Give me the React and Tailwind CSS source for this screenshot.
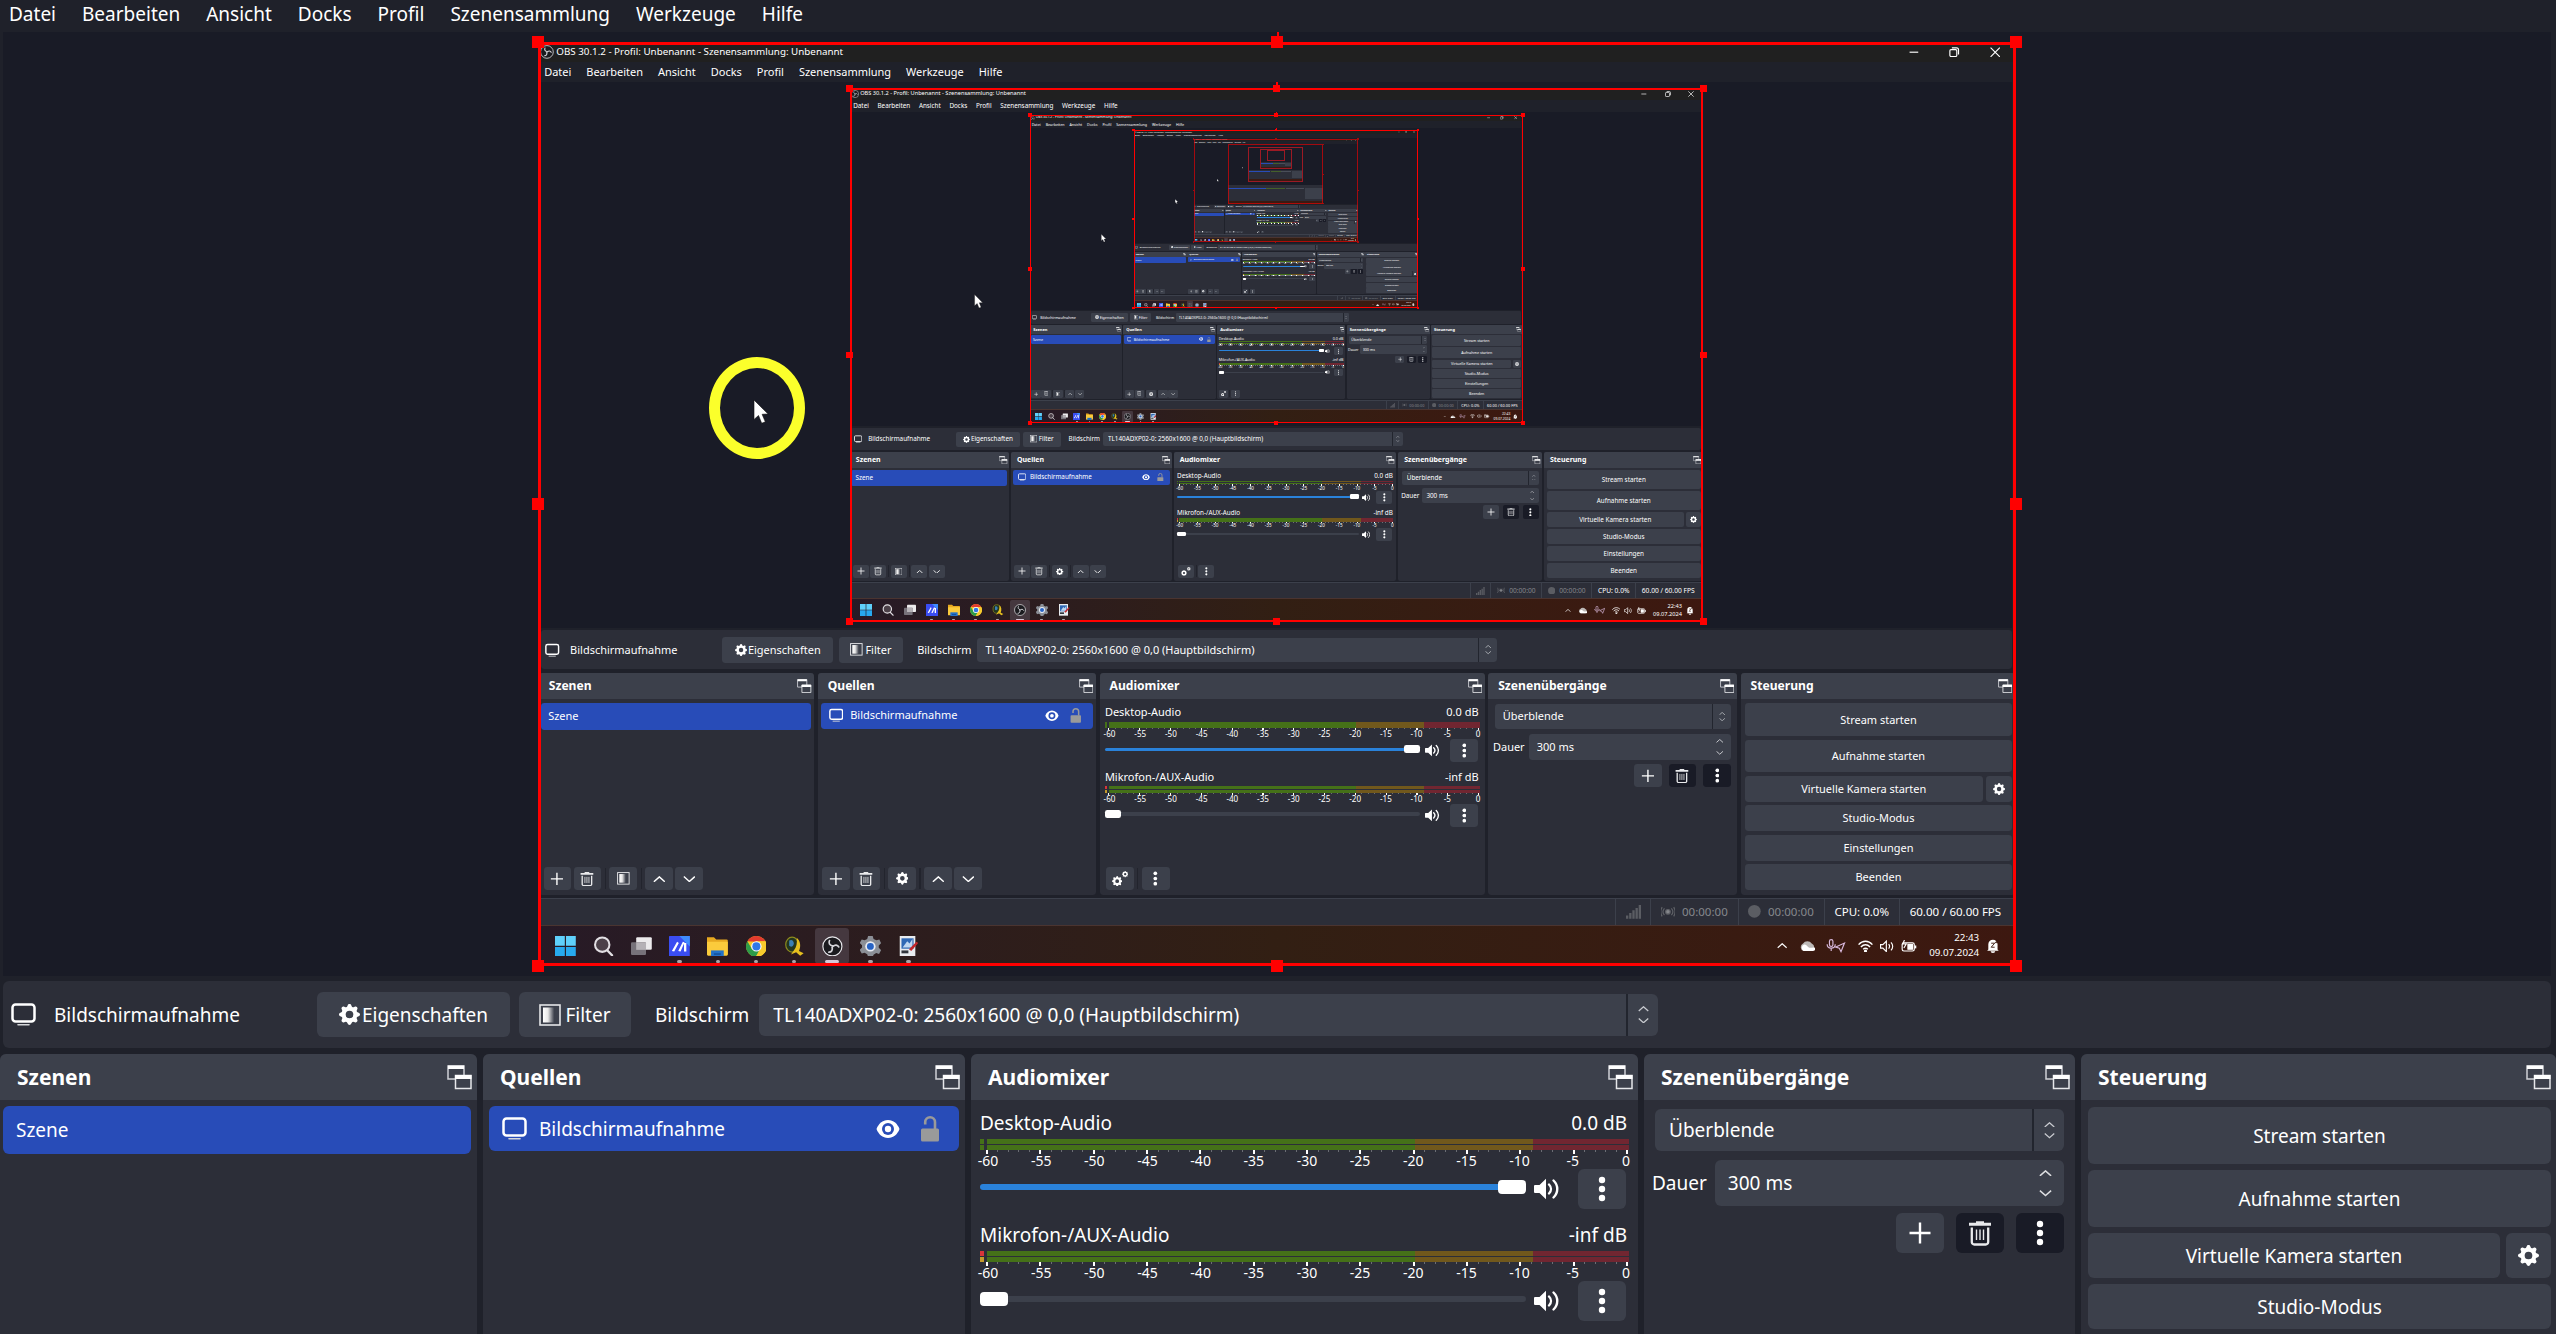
import React, { useId } from "react";
import { BsGearFill } from "react-icons/bs";

const LAST_DEPTH = 5;

/* ---------- icons ---------- */

function UndockIcon() {
  return (
    <svg width="25" height="25" viewBox="0 0 25 25" fill="none">
      <path d="M1 1h16v13H1z" stroke="#cfd1d6" strokeWidth="1.5" />
      <path d="M1 .5h16v3.5H1z" fill="#fff" />
      <path d="M8.500 10.500h15.500v13H8.500z" fill="#3c404b" stroke="#e6e7ea" strokeWidth="1.500" />
      <path d="M8 10h16.500v4H8z" fill="#fff" />
    </svg>
  );
}

function DisplayIcon() {
  return (
    <svg width="25" height="25" viewBox="0 0 25 25" fill="none">
      <rect x="1.500" y="2.500" width="22" height="17" rx="3" stroke="#fff" strokeWidth="2.500" />
      <path d="M7 22.800h11" stroke="#d6d7da" strokeWidth="1.600" strokeLinecap="round" />
    </svg>
  );
}

function FilterIcon() {
  const id = useId();
  return (
    <svg width="22" height="22" viewBox="0 0 22 22">
      <defs>
        <linearGradient id={id}>
          <stop offset="0" stopColor="#fff" />
          <stop offset=".35" stopColor="#e8e8e8" />
          <stop offset=".8" stopColor="#3c404b" />
        </linearGradient>
      </defs>
      <rect x="1" y="1" width="20" height="20" fill="#3c404b" stroke="#e4e5e8" strokeWidth="1.600" />
      <rect x="4" y="3.500" width="14" height="15" fill={`url(#${id})`} />
    </svg>
  );
}

function PlusIcon() {
  return (
    <svg width="24" height="24" viewBox="0 0 24 24" stroke="#fff" strokeWidth="2.400">
      <path d="M12 1.500v21M1.500 12h21" />
    </svg>
  );
}

function TrashIcon() {
  return (
    <svg width="24" height="25" viewBox="0 0 24 25" fill="none" stroke="#e9eaec">
      <path d="M1 3.300h22" strokeWidth="3" />
      <path d="M8 1.200h8" strokeWidth="2" />
      <path d="M3.800 6.500v14.500a2.500 2.500 0 0 0 2.500 2.500h11.400a2.500 2.500 0 0 0 2.500-2.500V6.500" strokeWidth="2.300" />
      <path d="M8.500 8.500v10.500M12 8.500v10.500M15.500 8.500v10.500" strokeWidth="1.400" />
    </svg>
  );
}

function DotsIcon() {
  return (
    <svg width="8" height="26" viewBox="0 0 8 26" fill="#fff">
      <circle cx="4" cy="4" r="3.200" />
      <circle cx="4" cy="13" r="3.200" />
      <circle cx="4" cy="22" r="3.200" />
    </svg>
  );
}

function UpIcon({ size = 22 }) {
  return (
    <svg width={size} height={size / 2} viewBox="0 0 22 11" fill="none" stroke="currentColor" strokeWidth="2.500">
      <path d="M1.500 10 11 1.500 20.500 10" />
    </svg>
  );
}

function DownIcon({ size = 22 }) {
  return (
    <svg width={size} height={size / 2} viewBox="0 0 22 11" fill="none" stroke="currentColor" strokeWidth="2.500">
      <path d="M1.500 1 11 9.500 20.500 1" />
    </svg>
  );
}

function EyeIcon() {
  return (
    <svg width="24" height="20" viewBox="0 0 24 20">
      <path d="M12 1C6.500 1 2.500 4.800.5 10c2 5.200 6 9 11.500 9s9.500-3.800 11.500-9C21.500 4.800 17.500 1 12 1z" fill="#fff" />
      <circle cx="12" cy="10" r="6" fill="#284cb8" />
      <circle cx="12" cy="10" r="3.200" fill="#fff" />
    </svg>
  );
}

function UnlockIcon() {
  return (
    <svg width="20" height="26" viewBox="0 0 20 26">
      <path d="M5.200 8.500V6.200a4.900 4.900 0 0 1 9.800 0V13" fill="none" stroke="#9a9a9a" strokeWidth="2.600" />
      <rect x="1" y="12.500" width="18" height="13" rx="1.500" fill="#9a9a9a" />
    </svg>
  );
}

function SpeakerIcon() {
  return (
    <svg width="26" height="22" viewBox="0 0 26 22">
      <path d="M1 7h4.500L12 .8v20.400L5.500 15H1a1 1 0 0 1-1-1V8a1 1 0 0 1 1-1z" fill="#fff" />
      <path d="M15 6.500c2.600 2.600 2.600 6.400 0 9M19.500 2.500c5 4.800 5 12.200 0 17" fill="none" stroke="#fff" strokeWidth="2.400" strokeLinecap="round" />
    </svg>
  );
}

function CogsIcon() {
  return (
    <span className="flex items-start">
      <BsGearFill className="mt-2" size={18} />
      <BsGearFill size={11} />
    </span>
  );
}

function ObsIcon({ size = 36 }) {
  return (
    <svg width={size} height={size} viewBox="0 0 36 36">
      <circle cx="18" cy="18" r="16.500" fill="#1b1b1f" stroke="#e8e8ec" strokeWidth="2" />
      <g fill="none" stroke="#d5d5da" strokeWidth="3" strokeLinecap="round">
        <path d="M18 17c-5-1-7-5-5-9" />
        <path d="M19 18c3.500-3.500 8-3 10 1" />
        <path d="M17.500 19.500c1.500 4.500-1 8.500-5.500 8.500" />
      </g>
    </svg>
  );
}

/* ---------- taskbar icons ---------- */

const taskIcons = [
  {
    name: "Start",
    art: (
      <g>
        <path d="M0 0h17v17H0zM19 0h17v17H19z" fill="#5fd0fb" />
        <path d="M0 19h17v17H0zM19 19h17v17H19z" fill="#27a9ef" />
      </g>
    ),
  },
  {
    name: "Suche",
    art: (
      <g fill="none" stroke="#e2dfe3">
        <circle cx="16" cy="15" r="12.500" fill="#4b4048" strokeWidth="3.500" />
        <path d="m25 25 8 8.500" strokeWidth="4" strokeLinecap="round" />
      </g>
    ),
  },
  {
    name: "Aufgabenansicht",
    art: (
      <g>
        <rect x="9" y="2" width="27" height="22" rx="2" fill="#eceaec" />
        <rect x="0" y="11" width="26" height="22" rx="2" fill="#77727a" />
        <rect x="9" y="11" width="17" height="13" fill="#b5b1b6" />
      </g>
    ),
  },
  {
    name: "Maps",
    open: true,
    art: (
      <g>
        <rect width="36" height="36" rx="1" fill="#3a4df2" />
        <path d="M18 0h18v18z" fill="#3f8cff" />
        <path d="M5 26 14 10l3 2-8 15zM16 26l8-16 3 1-7 16zM26 27V12h4v15z" fill="#fff" />
      </g>
    ),
  },
  {
    name: "Explorer",
    open: true,
    art: (
      <g>
        <path d="M0 2h12l4 4h18a2 2 0 0 1 2 2v24H0z" fill="#e7a920" />
        <path d="M0 10h36v22a2 2 0 0 1-2 2H2a2 2 0 0 1-2-2z" fill="#fbcb3c" />
        <path d="M7 25h22v11H7z" fill="#2372c9" />
        <path d="M12 30h12v2.500H12z" fill="#134e97" />
      </g>
    ),
  },
  {
    name: "Chrome",
    open: true,
    art: (
      <g>
        <circle cx="18" cy="18" r="18" fill="#f6c728" />
        <path d="M2.400 9A18 18 0 0 1 33.600 9L18 10z" fill="#e33b2e" />
        <path d="M2.400 9A18 18 0 0 0 17 36l7-13-14-1z" fill="#2d9c49" />
        <path d="M33.600 9H18l7 14-8 13A18 18 0 0 0 33.600 9z" fill="#f8cb2d" />
        <circle cx="18" cy="18" r="9" fill="#fff" />
        <circle cx="18" cy="18" r="7" fill="#2f78e6" />
      </g>
    ),
  },
  {
    name: "Ameise",
    open: true,
    art: (
      <g>
        <ellipse cx="14" cy="15" rx="11" ry="13" fill="#23361f" stroke="#8d8a1e" strokeWidth="2" />
        <path d="M9 8c4-3 8 0 8 5s-5 7-8 4z" fill="#3b7fb5" />
        <path d="M22 3c6 5 8 14 4 23l8 4-6 4-7-6-9 4 5-7c5-6 6-13 5-22z" fill="#e6c01f" />
      </g>
    ),
  },
  {
    name: "OBS",
    active: true,
    art: (
      <g>
        <circle cx="18" cy="18" r="16.500" fill="#1b1b1f" stroke="#e8e8ec" strokeWidth="2" />
        <g fill="none" stroke="#d5d5da" strokeWidth="3" strokeLinecap="round">
          <path d="M18 17c-5-1-7-5-5-9M19 18c3.500-3.500 8-3 10 1M17.500 19.500c1.500 4.500-1 8.500-5.500 8.500" />
        </g>
      </g>
    ),
  },
  {
    name: "Einstellungen",
    open: true,
    art: (
      <g>
        <path d="m14 0 8 0 1.500 5 5 2.500L33.500 6l3 6.500-4 4v4l4 4-3.500 6.500-5-1.500-4.500 3L22 36h-8l-1.500-4.500-4.500-2.500L3 30.500-.5 24l4-4v-4l-4-4L3 6l5 1.500 4.500-2.500z" fill="#8b8f96" />
        <circle cx="18" cy="18" r="9" fill="#e9edf4" />
        <circle cx="18" cy="18" r="6" fill="#2763c4" />
      </g>
    ),
  },
  {
    name: "Paint",
    open: true,
    art: (
      <g>
        <rect x="3" y="0" width="27" height="35" fill="#e8ebef" />
        <path d="M6 4h21v18H6z" fill="#2f68b5" />
        <path d="m8 20 8-11 4 4 5-8v15z" fill="#bfd7f1" />
        <path d="M6 25h12v5H6z" fill="#30343c" />
        <path d="m19 23 13-13 3 2-12 14z" fill="#c3272b" />
      </g>
    ),
  },
];

/* ---------- shared controls ---------- */

function ToolButton({ label, children, dark }) {
  return (
    <button
      type="button"
      aria-label={label}
      className={
        "flex w-12 h-10 shrink-0 items-center justify-center rounded-md " + (dark ? "bg-[#191b26]" : "bg-[#3c404b]")
      }
    >
      {children}
    </button>
  );
}

function SelectBox({ label, value, className }) {
  return (
    <div className={"relative flex h-[42px] rounded-md bg-[#3c404b] " + className}>
      <select aria-label={label} defaultValue={value} className="w-full appearance-none bg-transparent px-3.5 outline-none">
        <option>{value}</option>
      </select>
      <span className="pointer-events-none absolute inset-y-0 right-0 flex w-8 flex-col items-center justify-center gap-1.5 border-l-2 border-[#22252e] text-[#c9cbd0]">
        <UpIcon size={11} />
        <DownIcon size={11} />
      </span>
    </div>
  );
}

function Dock({ title, className, children, footer }) {
  return (
    <section className={"flex min-w-0 flex-col overflow-hidden rounded-md bg-[#2c2e38] " + className}>
      <header className="flex h-[46px] shrink-0 items-center justify-between bg-[#3c404b] pl-[17px] pr-[5px]">
        <h2 className="text-[21px] font-bold">{title}</h2>
        <button type="button" aria-label={title + " abdocken"}>
          <UndockIcon />
        </button>
      </header>
      <div className="flex-1">{children}</div>
      {footer && <footer className="flex items-center px-2 pb-2">{footer}</footer>}
    </section>
  );
}

function Divider() {
  return <span className="mx-1.5 h-9 w-0.5 bg-[#22242d]" />;
}

/* ---------- docks ---------- */

function ListFooter({ middle, middleLabel }) {
  return (
    <>
      <div className="flex gap-1">
        <ToolButton label="Hinzufügen"><PlusIcon /></ToolButton>
        <ToolButton label="Entfernen"><TrashIcon /></ToolButton>
      </div>
      <Divider />
      <ToolButton label={middleLabel}>{middle}</ToolButton>
      <Divider />
      <div className="flex gap-1">
        <ToolButton label="Nach oben"><UpIcon /></ToolButton>
        <ToolButton label="Nach unten"><DownIcon /></ToolButton>
      </div>
    </>
  );
}

const dbLabels = [-60, -55, -50, -45, -40, -35, -30, -25, -20, -15, -10, -5, 0];
const dbTicks = Array.from({ length: 61 }, (_, i) => i);

function MeterBar({ peak }) {
  return (
    <div className="flex h-[5px] gap-[3px]">
      <span className={"w-1 " + peak} />
      <span className="flex flex-1">
        <span className="grow-[428] bg-[#457118]" />
        <span className="grow-[118] bg-[#71581c]" />
        <span className="grow-[96] bg-[#712631]" />
      </span>
    </div>
  );
}

function Channel({ name, level, full, peaks }) {
  return (
    <div className="h-28 pl-[9px]">
      <div className="flex h-[39px] items-center justify-between pr-[11px] pt-[7px]">
        <span>{name}</span>
        <span>{level}</span>
      </div>
      <div className="flex flex-col gap-px pr-[9px]">
        <MeterBar peak={peaks[0]} />
        <MeterBar peak={peaks[1]} />
      </div>
      <div className="ml-1.5 mr-[9px] flex justify-between">
        {dbTicks.map((t) => (
          <span key={t} className={t % 5 === 0 ? "h-1 w-0.5 bg-white" : "h-0.5 w-px bg-[#6b6d74]"} />
        ))}
      </div>
      <div className="ml-2 mr-3 flex h-3.5 justify-between text-sm leading-[14px]">
        {dbLabels.map((d) => (
          <span key={d} className="flex w-0 justify-center whitespace-nowrap">{d}</span>
        ))}
      </div>
      <div className="mt-px flex h-10 items-center pr-3">
        <input
          type="range"
          aria-label={name}
          defaultValue={full ? 100 : 0}
          className={
            "mb-1 h-4 min-w-0 flex-1 appearance-none rounded bg-transparent [&::-webkit-slider-runnable-track]:h-1.5 [&::-webkit-slider-runnable-track]:rounded-sm [&::-webkit-slider-thumb]:-mt-1 [&::-webkit-slider-thumb]:h-3.5 [&::-webkit-slider-thumb]:w-7 [&::-webkit-slider-thumb]:appearance-none [&::-webkit-slider-thumb]:rounded [&::-webkit-slider-thumb]:bg-white " +
            (full
              ? "[&::-webkit-slider-runnable-track]:bg-[#2a82da]"
              : "[&::-webkit-slider-runnable-track]:bg-[#3c404b]")
          }
        />
        <button type="button" aria-label={name + " stummschalten"} className="ml-2 mr-[18px]">
          <SpeakerIcon />
        </button>
        <ToolButton label={name + " Optionen"}><DotsIcon /></ToolButton>
      </div>
    </div>
  );
}

function ControlButton({ children, tall }) {
  return (
    <button type="button" className={"w-full rounded-md bg-[#3c404b] " + (tall ? "h-[57px]" : "h-[45px]")}>
      {children}
    </button>
  );
}

function Docks({ cropped }) {
  const dauerId = useId();
  return (
    <div className="flex h-[385px] gap-1.5">
      <Dock
        title="Szenen"
        className="flex-[477_1_0%]"
        footer={<ListFooter middle={<FilterIcon />} middleLabel="Szenenfilter" />}
      >
        <ul className="pl-[3px] pr-1.5 pt-1.5">
          <li className="flex h-12 items-center rounded-md bg-[#284cb8] px-[13px]">Szene</li>
        </ul>
      </Dock>

      <Dock
        title="Quellen"
        className="flex-[482_1_0%]"
        footer={<ListFooter middle={<BsGearFill size={22} />} middleLabel="Eigenschaften der Quelle" />}
      >
        <ul className="px-1.5 pt-1.5">
          <li className="flex h-[45px] items-center rounded-md bg-[#284cb8] px-[13px]">
            <DisplayIcon />
            <span className="ml-3 flex-1">Bildschirmaufnahme</span>
            <button type="button" aria-label="Sichtbarkeit"><EyeIcon /></button>
            <button type="button" aria-label="Sperren" className="ml-5 mr-1.5"><UnlockIcon /></button>
          </li>
        </ul>
      </Dock>

      <Dock
        title="Audiomixer"
        className="flex-[667_1_0%]"
        footer={
          <div className="flex items-center pl-[3px]">
            <ToolButton label="Erweiterte Audioeigenschaften"><CogsIcon /></ToolButton>
            <Divider />
            <ToolButton label="Audiomixer-Menü"><DotsIcon /></ToolButton>
          </div>
        }
      >
        <Channel name="Desktop-Audio" level="0.0 dB" full peaks={["bg-[#457118]", "bg-[#457118]"]} />
        <Channel name="Mikrofon-/AUX-Audio" level="-inf dB" peaks={["bg-[#d8343a]", "bg-[#c49a2c]"]} />
      </Dock>

      <Dock title="Szenenübergänge" className="flex-[431_1_0%]">
        <div className="flex flex-col pl-2 pr-[11px] pt-[9px]">
          <SelectBox label="Übergang" value="Überblende" className="ml-[3px]" />
          <div className="mt-[9px] flex items-center">
            <label htmlFor={dauerId}>Dauer</label>
            <div className="ml-2 flex h-[46px] min-w-0 flex-1 items-center rounded-md bg-[#3c404b]">
              <input id={dauerId} defaultValue="300 ms" className="min-w-0 flex-1 bg-transparent pl-[13px] outline-none" />
              <div className="flex w-[38px] flex-col items-center gap-3.5 text-[#dcdde0]">
                <button type="button" aria-label="Dauer erhöhen"><UpIcon size={13} /></button>
                <button type="button" aria-label="Dauer verringern"><DownIcon size={13} /></button>
              </div>
            </div>
          </div>
          <div className="mt-[7px] flex justify-end gap-3">
            <ToolButton label="Übergang hinzufügen"><PlusIcon /></ToolButton>
            <ToolButton label="Übergang entfernen" dark><TrashIcon /></ToolButton>
            <ToolButton label="Übergangsmenü" dark><DotsIcon /></ToolButton>
          </div>
        </div>
      </Dock>

      <Dock title="Steuerung" className="flex-[475_1_0%]">
        <div className="flex flex-col gap-1.5 pl-[7px] pr-[5px] pt-[7px]">
          <ControlButton tall>Stream starten</ControlButton>
          <ControlButton tall>Aufnahme starten</ControlButton>
          <div className="flex gap-1.5">
            <ControlButton>Virtuelle Kamera starten</ControlButton>
            <button
              type="button"
              aria-label="Virtuelle Kamera konfigurieren"
              className="flex h-[45px] w-[45px] shrink-0 items-center justify-center rounded-md bg-[#3c404b]"
            >
              <BsGearFill size={21} />
            </button>
          </div>
          <ControlButton>Studio-Modus</ControlButton>
          {!cropped && <ControlButton>Einstellungen</ControlButton>}
          {!cropped && <ControlButton>Beenden</ControlButton>}
        </div>
      </Dock>
    </div>
  );
}

/* ---------- window parts ---------- */

function TitleBar() {
  return (
    <div className="flex h-[34px] items-center bg-[#202020] pl-1 pr-7 text-[17px]">
      <ObsIcon size={24} />
      <span className="ml-1 flex-1">OBS 30.1.2 - Profil: Unbenannt - Szenensammlung: Unbenannt</span>
      <div className="flex items-center gap-[52px]">
        <svg width="18" height="18" viewBox="0 0 18 18" stroke="#fff" strokeWidth="2"><path d="M1 9h15" /></svg>
        <svg width="18" height="18" viewBox="0 0 18 18" stroke="#fff" strokeWidth="2" fill="none">
          <rect x="1.500" y="4.500" width="12" height="12" rx="2" />
          <path d="M5 1.500h8a3.500 3.500 0 0 1 3.500 3.500v8" />
        </svg>
        <svg width="18" height="18" viewBox="0 0 18 18" stroke="#fff" strokeWidth="2"><path d="m1 1 16 16M17 1 1 17" /></svg>
      </div>
    </div>
  );
}

const menus = ["Datei", "Bearbeiten", "Ansicht", "Docks", "Profil", "Szenensammlung", "Werkzeuge", "Hilfe"];

function MenuBar({ outer }) {
  return (
    <nav className={"flex items-center gap-[26px] px-[9px] " + (outer ? "h-8 pb-1" : "h-9")}>
      {menus.map((m) => (
        <button key={m} type="button">{m}</button>
      ))}
    </nav>
  );
}

const handleSpots = [
  "-left-1.5 -top-1.5",
  "left-1/2 -ml-1.5 -top-1.5",
  "-right-1.5 -top-1.5",
  "-left-1.5 top-1/2 -mt-1.5",
  "-right-1.5 top-1/2 -mt-1.5",
  "-left-1.5 -bottom-1.5",
  "left-1/2 -ml-1.5 -bottom-1.5",
  "-right-1.5 -bottom-1.5",
];

function Selection({ outer, faint }) {
  return (
    <div className={"pointer-events-none absolute inset-0 " + (faint ? "opacity-60" : "")}>
      <div className={"absolute inset-0 border-[#ff0000] " + (outer ? "border-[3px]" : "border-4")} />
      <span className="absolute -top-2.5 left-1/2 h-2 w-0.5 bg-[#ff0000]" />
      {handleSpots.map((s) => (
        <span key={s} className={"absolute size-3 bg-[#ff0000] " + s} />
      ))}
    </div>
  );
}

function Cursor({ ring }) {
  return (
    <div className="absolute left-[171px] top-[315px] flex h-[102px] w-24 items-center justify-center">
      {ring && <span className="absolute inset-0 rounded-[50%] border-[11px] border-[#fbff2b]" />}
      <svg className="ml-2 mt-2" width="16" height="26" viewBox="0 0 16 26">
        <path d="M1 1v19.500l4.500-4 3.200 7.800 3.600-1.500-3.200-7.500 6-.3z" fill="#fff" stroke="#111" strokeWidth=".6" />
      </svg>
    </div>
  );
}

/* Colour blocks that stand for the window once it is too small to hold text. */
function FarWindow({ depth }) {
  return (
    <div className="flex h-full flex-col bg-[#191b26]">
      <div className="flex flex-1 items-center justify-center">
        <div className="h-[1600px] w-[2560px] border-[24px] border-[#9c1a24] [zoom:0.5775]">
          {depth > 0 && <FarWindow depth={depth - 1} />}
        </div>
      </div>
      <div className="grid h-[440px] grid-cols-5 gap-4 bg-[#2c2e38]">
        <span className="mt-20 h-12 bg-[#284cb8]" />
        <span className="mt-20 h-12 bg-[#284cb8]" />
        <span className="mt-20 h-10 bg-[#45602a]" />
        <span className="mt-20 h-12 bg-[#4a4e59]" />
        <span className="mt-20 h-80 bg-[#3c404b]" />
      </div>
      <div className="h-[71px] bg-[#3a1a12]" />
    </div>
  );
}

function Preview({ depth }) {
  return (
    <div className="mr-[5px] ml-[3px] flex justify-center overflow-hidden bg-[#191b26] py-2.5">
      <div className="relative shrink-0">
        <div className="h-[1600px] w-[2560px] bg-[#191b26] [zoom:0.5775]">
          {depth < LAST_DEPTH ? <Desktop depth={depth + 1} /> : <FarWindow depth={2} />}
        </div>
        <Selection outer={depth === 0} faint={depth > 3} />
        <Cursor ring={depth === 0} />
      </div>
    </div>
  );
}

function SourceBar() {
  return (
    <div className="mr-[5px] ml-[3px] flex h-[67px] items-center rounded-md bg-[#2c2e38] pl-2">
      <DisplayIcon />
      <span className="ml-[18px] w-[263px]">Bildschirmaufnahme</span>
      <button type="button" className="flex h-[45px] w-[193px] items-center justify-center gap-0.5 rounded-md bg-[#3c404b]">
        <BsGearFill size={21} />
        Eigenschaften
      </button>
      <button type="button" className="ml-[9px] flex h-[45px] w-28 items-center justify-center gap-1 rounded-md bg-[#3c404b]">
        <FilterIcon />
        Filter
      </button>
      <span className="ml-6 mr-2.5">Bildschirm</span>
      <SelectBox label="Bildschirm" value="TL140ADXP02-0: 2560x1600 @ 0,0 (Hauptbildschirm)" className="w-[899px]" />
    </div>
  );
}

function StatusBar() {
  const cell = "flex h-full items-center gap-3 border-l-2 border-[#3c404b] px-[17px] ";
  return (
    <div className="mt-[5px] flex h-[47px] items-center justify-end border-t-2 border-[#3c404b] bg-[#2c2e38] text-xl">
      <span className={cell}>
        <svg width="26" height="24" viewBox="0 0 26 24" fill="#5b5d63">
          <path d="M0 18h4v6H0zM5.500 14h4v10h-4zM11 9h4v15h-4zM16.500 5h4v19h-4zM22 0h4v24h-4z" />
        </svg>
      </span>
      <span className={cell + "text-[#85878c]"}>
        <svg width="24" height="20" viewBox="0 0 24 20" fill="none" stroke="#5f6167" strokeWidth="2">
          <circle cx="12" cy="10" r="4" fill="#85878c" />
          <path d="M6 4c-3 3.500-3 8.500 0 12M18 4c3 3.500 3 8.500 0 12M2 2c-3 5-3 11 0 16M22 2c3 5 3 11 0 16" />
        </svg>
        00:00:00
      </span>
      <span className={cell + "text-[#85878c]"}>
        <svg width="22" height="22" viewBox="0 0 22 22"><circle cx="11" cy="11" r="11" fill="#5b5d63" /></svg>
        00:00:00
      </span>
      <span className={cell}>CPU: 0.0%</span>
      <span className={cell + "pr-[26px]"}>60.00 / 60.00 FPS</span>
    </div>
  );
}

function Taskbar() {
  return (
    <div className="flex h-[71px] items-center border-t-2 border-[#4a3430] bg-linear-to-r from-[#271a26] via-[#321f13] to-[#3d1810] pl-[18px] pr-7">
      {taskIcons.map((t) => (
        <button
          key={t.name}
          type="button"
          aria-label={t.name}
          className={
            "relative mr-1.5 flex h-[62px] w-[60px] items-center justify-center rounded-md " + (t.active ? "bg-[#45383f]" : "")
          }
        >
          <svg width="36" height="36" viewBox="0 0 36 36">{t.art}</svg>
          {t.open && <span className="absolute bottom-0.5 h-1 w-2 rounded-full bg-[#a9a3a8]" />}
          {t.active && <span className="absolute bottom-0.5 h-1 w-6 rounded-full bg-[#d5c8d8]" />}
        </button>
      ))}
      <div className="ml-auto flex items-center gap-5 text-white">
        <UpIcon size={18} />
        <svg width="28" height="20" viewBox="0 0 28 20">
          <path d="M8 19a7 7 0 0 1-1-13A9 9 0 0 1 22 6a7 7 0 0 1 0 13z" fill="#bcb8b6" />
          <path d="M8 19a6 6 0 0 1 1-11c4 0 5 3 8 5s9-2 11 1-2 5-5 5z" fill="#fff" />
        </svg>
        <svg width="34" height="24" viewBox="0 0 34 24" fill="none" stroke="#d9b9dd" strokeWidth="2">
          <rect x="6" y="1" width="6" height="12" rx="3" />
          <path d="M2 9c0 9 14 9 14 0M9 16v5M17 14l15-7-6 15-3-6z" />
        </svg>
        <svg width="26" height="22" viewBox="0 0 26 22" fill="none" stroke="#fff" strokeWidth="2.500">
          <path d="M1 8c7-8 17-8 24 0M5 12c5-5 11-5 16 0M9 16c3-2.500 5-2.500 8 0" />
          <circle cx="13" cy="19" r="1.500" fill="#fff" />
        </svg>
        <svg className="-ml-2" width="26" height="22" viewBox="0 0 26 22" fill="none" stroke="#fff" strokeWidth="2">
          <path d="M1 8h4l6-6v18l-6-6H1zM15 7c2 2.500 2 5.500 0 8M19 4c4 4 4 10 0 14" />
        </svg>
        <svg className="-ml-2" width="28" height="22" viewBox="0 0 28 22" fill="none" stroke="#fff" strokeWidth="2">
          <rect x="2" y="5" width="21" height="14" rx="3" />
          <path d="M12 8h8v8h-8z" fill="#fff" />
          <path d="M25 9.500v5" strokeWidth="3" />
          <path d="M6 0 3 7h6L5 14" />
        </svg>
        <div className="text-right text-[17px] leading-[25px]">
          <div>22:43</div>
          <div>09.07.2024</div>
        </div>
        <svg className="-ml-2" width="24" height="26" viewBox="0 0 24 26">
          <path d="M4 20V11a8 8 0 0 1 16 0v9l2 2H2zM8 23h8a4 3 0 0 1-8 0z" fill="#fff" />
          <path d="M9 9h6l-6 7h6M16 3h5l-5 5h5" fill="none" stroke="#3a1910" strokeWidth="1.600" />
        </svg>
      </div>
    </div>
  );
}

function ObsWindow({ depth }) {
  return (
    <>
      <MenuBar outer={depth === 0} />
      <Preview depth={depth} />
      <div className="flex flex-col gap-1.5 pt-[5px]">
        <SourceBar />
        <Docks cropped={depth === 0} />
      </div>
    </>
  );
}

/* The captured monitor, as the display source shows it. */
function Desktop({ depth }) {
  return (
    <div className="flex h-full flex-col overflow-hidden bg-[#1f212a]">
      <TitleBar />
      <div className="px-0.5">
        <ObsWindow depth={depth} />
      </div>
      <StatusBar />
      <Taskbar />
    </div>
  );
}

export default function App() {
  return (
    <main className="h-screen overflow-hidden bg-[#1f212a] font-['Noto_Sans','Open_Sans',sans-serif] text-[19px] leading-7 text-white">
      <ObsWindow depth={0} />
    </main>
  );
}
